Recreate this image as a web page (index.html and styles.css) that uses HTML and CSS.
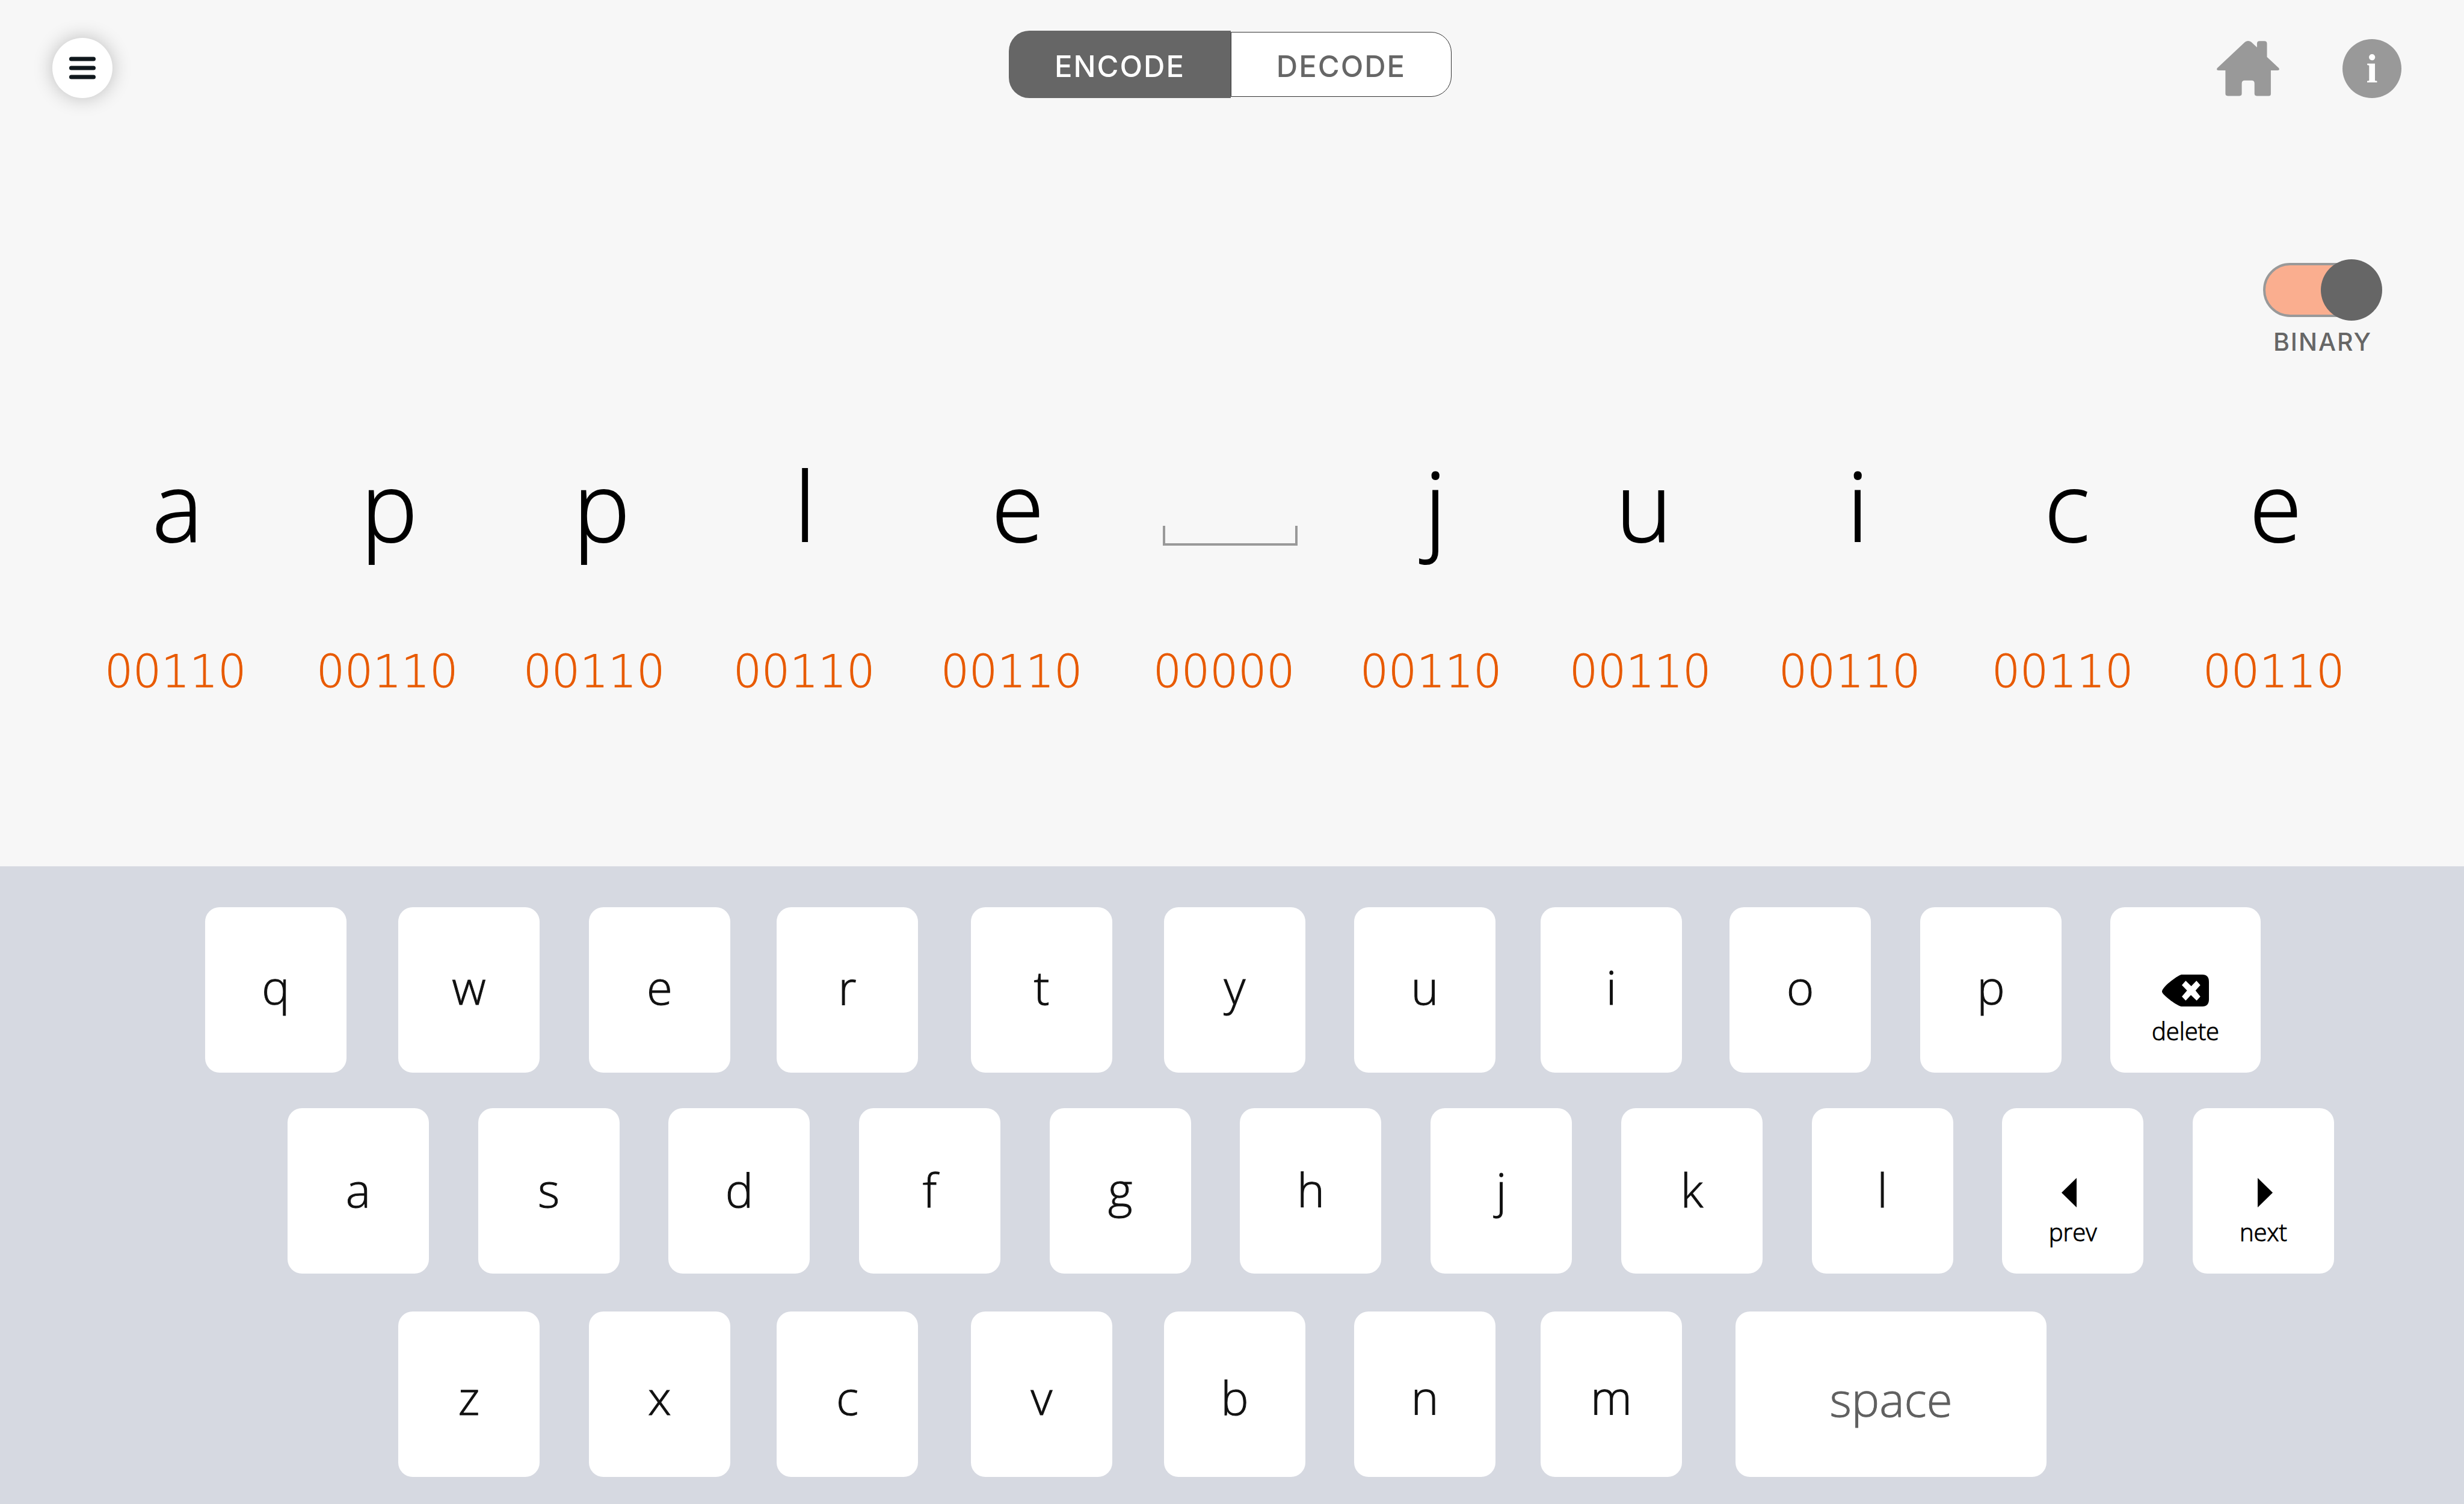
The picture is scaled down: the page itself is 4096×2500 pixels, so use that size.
FILE: index.html
```html
<!DOCTYPE html>
<html lang="en">
<head>
<meta charset="utf-8">
<meta name="viewport" content="width=device-width, initial-scale=1">
<title>Encode</title>
<link rel="stylesheet" href="styles.css">
</head>
<body>
<main class="stage">
  <header class="topbar">
    <button class="menu" type="button" aria-label="Menu">
      <svg width="44" height="38" viewBox="0 0 44 38" aria-hidden="true"><path d="M3.500 4H40.500M3.500 19H40.500M3.500 34H40.500" stroke="#10181d" stroke-width="7" stroke-linecap="round"/></svg>
    </button>
    <div class="modes" role="group" aria-label="Mode">
      <button class="mode mode-active" type="button" aria-pressed="true">ENCODE</button>
      <button class="mode" type="button" aria-pressed="false">DECODE</button>
    </div>
    <nav class="links" aria-label="Pages">
      <a class="home" href="#" aria-label="Home">
        <svg width="104" height="98" viewBox="0 0 325 306" aria-hidden="true"><path fill="#999" d="M3 150L147 15Q163 3 179 15L209 43V24Q209 10 223 10H247Q261 10 261 24V93L322 150Q330 162 316 162H281V284Q281 295 270 295H208Q196 295 196 283V230Q196 215 181 215H145Q130 215 130 230V283Q130 295 118 295H57Q45 295 45 283V162H9Q-5 162 3 150Z"/></svg>
      </a>
      <a class="info" href="#" aria-label="Information">i</a>
    </nav>
  </header>

  <div class="options">
    <label class="binary"><input class="switch" type="checkbox" checked><span>BINARY</span></label>
  </div>

  <ol class="letters">
    <li>a</li><li>p</li><li>p</li><li>l</li><li>e</li>
    <li class="blank" aria-label="space"></li>
    <li>j</li><li>u</li><li>i</li><li>c</li><li>e</li>
  </ol>
  <ol class="codes">
    <li>00110</li><li>00110</li><li>00110</li><li>00110</li><li>00110</li>
    <li>00000</li>
    <li>00110</li><li>00110</li><li>00110</li><li>00110</li><li>00110</li>
  </ol>
</main>

<section class="keyboard" aria-label="Keyboard">
  <div class="row row-top">
    <button class="key" type="button">q</button>
    <button class="key" type="button">w</button>
    <button class="key" type="button">e</button>
    <button class="key" type="button">r</button>
    <button class="key" type="button">t</button>
    <button class="key" type="button">y</button>
    <button class="key" type="button">u</button>
    <button class="key" type="button">i</button>
    <button class="key" type="button">o</button>
    <button class="key" type="button">p</button>
    <button class="key key-action key-wide" type="button">
      <svg width="78" height="53" viewBox="0 0 78 53" aria-hidden="true"><path fill="#000" fill-rule="evenodd" d="M32 0H67Q78 0 78 12V41Q78 53 67 53H32C24 51 5 37 .5 30Q-.5 28 .5 26C5 17 24 3 32 0ZM33 17.500L41.600 26.600L33 36.400L39.400 43.300L48 33.900L57.600 43.300L63.700 36.400L55.700 26.600L63.700 17.500L57.300 10.300L48.600 19.300L39.400 10.300Z"/></svg>
      <span>delete</span>
    </button>
  </div>
  <div class="row row-middle">
    <button class="key" type="button">a</button>
    <button class="key" type="button">s</button>
    <button class="key" type="button">d</button>
    <button class="key" type="button">f</button>
    <button class="key" type="button">g</button>
    <button class="key" type="button">h</button>
    <button class="key" type="button">j</button>
    <button class="key" type="button">k</button>
    <button class="key" type="button">l</button>
    <button class="key key-action" type="button">
      <svg width="37" height="49" viewBox="0 0 37 49" aria-hidden="true"><path d="M0 24.500L25 0V49Z"/></svg>
      <span>prev</span>
    </button>
    <button class="key key-action" type="button">
      <svg width="31" height="49" viewBox="0 0 31 49" aria-hidden="true"><path d="M31 24.500L6 0V49Z"/></svg>
      <span>next</span>
    </button>
  </div>
  <div class="row row-bottom">
    <button class="key" type="button">z</button>
    <button class="key" type="button">x</button>
    <button class="key" type="button">c</button>
    <button class="key" type="button">v</button>
    <button class="key" type="button">b</button>
    <button class="key" type="button">n</button>
    <button class="key" type="button">m</button>
    <button class="key key-space" type="button">space</button>
  </div>
</section>
</body>
</html>
```
FILE: styles.css
```css
* {
  box-sizing: border-box;
}

body {
  margin: 0;
  min-height: 100vh;
  display: flex;
  flex-direction: column;
  background: #f7f7f7;
  color: #000;
  font-family: "Open Sans", "Noto Sans", sans-serif;
  font-weight: 360;
}

button {
  margin: 0;
  padding: 0;
  border: 0;
  font: inherit;
  color: inherit;
}

ol {
  margin: 0;
  padding: 0;
  list-style: none;
}

.stage {
  flex: 1;
}

/* Top bar */

.topbar {
  display: grid;
  grid-template-columns: 1590fr 736px 1579fr;
  align-items: end;
  padding: 51px 104px 0 87px;
}

.menu {
  display: grid;
  place-items: center;
  width: 100px;
  height: 100px;
  border-radius: 50%;
  background: #fff;
  box-shadow: 0 0 32px rgba(0, 0, 0, 0.24);
}

.modes {
  display: flex;
  align-items: center;
}

.mode {
  flex: 366;
  height: 108px;
  padding-top: 7px;
  border: 1px solid #333;
  border-radius: 0 34px 34px 0;
  background: #fff;
  color: #666;
  font-family: Inter, sans-serif;
  font-size: 49px;
  font-weight: 500;
  letter-spacing: 2px;
}

.mode-active {
  flex: 370;
  height: 112px;
  border: 0;
  border-radius: 34px 0 0 34px;
  background: #666;
  color: #fff;
}

.links {
  display: flex;
  justify-content: flex-end;
  gap: 105px;
}

.home,
.home svg {
  display: block;
}

.info {
  width: 98px;
  height: 98px;
  border-radius: 50%;
  background: #999;
  color: #fff;
  font: bold 68px/98px "Liberation Serif", serif;
  text-align: center;
  text-decoration: none;
}

/* Binary switch */

.options {
  display: flex;
  justify-content: flex-end;
  padding: 268px 136px 0 0;
}

.binary {
  display: flex;
  flex-direction: column;
  align-items: center;
  gap: 10px;
  color: #666;
  font: 500 41px/50px Inter, sans-serif;
  letter-spacing: 2px;
}

.switch {
  appearance: none;
  position: relative;
  width: 198px;
  height: 102px;
  margin: 0;
}

.switch::before {
  content: "";
  position: absolute;
  inset: 6px 16px 6px 0;
  border: 4px solid #999;
  border-radius: 45px;
  background: #faae8f;
}

.switch::after {
  content: "";
  position: absolute;
  top: 0;
  right: 0;
  width: 102px;
  height: 102px;
  border-radius: 50%;
  background: #666;
}

/* Typed letters and their codes */

.letters,
.codes {
  display: grid;
  text-align: center;
}

.letters li,
.codes li {
  width: 232px;
}

.letters {
  grid-template-columns: 352fr 353fr 338fr 354fr 353fr 341fr 347fr 355fr 348fr 347fr 232fr;
  margin-top: 146px;
  padding: 0 197px 0 179px;
  font-size: 158px;
  line-height: 200px;
  -webkit-text-stroke: 2px #000;
}

.letters .blank {
  align-self: end;
  justify-self: start;
  width: 224px;
  height: 33px;
  margin: 0 4px 32px;
  border: solid #999;
  border-width: 0 4px 4px;
}

.codes {
  grid-template-columns: 352fr 344fr 349fr 345fr 353fr 344fr 348fr 348fr 354fr 351fr 232fr;
  margin-top: 127px;
  padding: 0 202px 0 174px;
  color: #e85a00;
  font-family: "DejaVu Sans", sans-serif;
  font-size: 74px;
  font-weight: 200;
  line-height: 100px;
  -webkit-text-stroke: 1px #e85a00;
}

/* Keyboard */

.keyboard {
  display: grid;
  row-gap: 59px;
  padding: 68px 0 45px;
  background: #d6d9e1;
}

.row {
  display: grid;
}

.row-top {
  grid-template-columns: 321fr 317fr 312fr 323fr 321fr 316fr 310fr 314fr 317fr 316fr 250fr;
  padding: 0 338px 0 341px;
}

.row-middle {
  display: flex;
  justify-content: space-between;
  padding: 0 216px 0 478px;
}

.row-bottom {
  grid-template-columns: 317fr 312fr 323fr 321fr 316fr 310fr 324fr 517fr;
  margin-top: 4px;
  padding: 0 694px 0 662px;
}

.key {
  width: 235px;
  height: 275px;
  border-radius: 24px;
  background: #fff;
  color: #111;
  font-size: 78px;
  -webkit-text-stroke: 1px;
}

.row-top .key {
  padding-bottom: 12px;
}

.row-middle .key {
  padding-bottom: 6px;
}

.row-bottom .key {
  padding-top: 8px;
}

.row .key-action {
  display: flex;
  flex-direction: column;
  justify-content: flex-end;
  align-items: center;
  gap: 14px;
  padding-bottom: 42px;
  color: #000;
  font-size: 40px;
  line-height: 54px;
}

.key-wide {
  width: 100%;
}

.row .key-space {
  width: 100%;
  padding-top: 14px;
  color: #606060;
}
```
